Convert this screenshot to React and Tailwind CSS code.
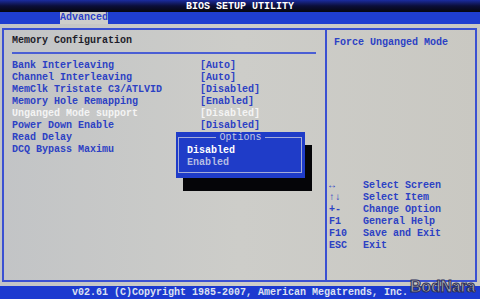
import React from "react";

const rows = [
  ["Bank Interleaving", "[Auto]"],
  ["Channel Interleaving", "[Auto]"],
  ["MemClk Tristate C3/ATLVID", "[Disabled]"],
  ["Memory Hole Remapping", "[Enabled]"],
  ["Unganged Mode support", "[Disabled]", true],
  ["Power Down Enable", "[Disabled]"],
  ["Read Delay", ""],
  ["DCQ Bypass Maximu", ""],
];

const help = [
  ["↔", "Select Screen"],
  ["↑↓", "Select Item"],
  ["+-", "Change Option"],
  ["F1", "General Help"],
  ["F10", "Save and Exit"],
  ["ESC", "Exit"],
];

export default function App() {
  return (
    <div className="relative w-[480px] h-[299px] overflow-hidden flex flex-col font-['Liberation_Mono','DejaVu_Sans_Mono',monospace] font-bold text-[10px] leading-[12px] bg-gradient-to-r from-[#c2c4c6] via-[#cdcdc9] to-[#c9c8c2]">
      <div className="h-[12px] shrink-0 bg-gradient-to-b from-[#1b2ca0] via-[#0b0e38] to-[#06060f] text-white text-center leading-[13px]">
        BIOS SETUP UTILITY
      </div>
      <div className="h-[12px] shrink-0 bg-[#1f3ed0] pl-[60px] flex">
        <div className="h-full bg-[#cdcecb] text-[#2a3fc8] leading-[12px]">Advanced</div>
      </div>
      <div className="flex-1 min-h-0 pt-[4px] pl-[2px] pr-[3px] pb-[4px]">
        <div className="flex h-full border-2 border-[#3a50d2]">
          <div className="w-[323px] shrink-0 border-r-2 border-[#3a50d2] pl-[8px] pt-[5px]">
            <div className="text-[#1c1c2a]">Memory Configuration</div>
            <div className="mt-[5px] mr-[9px] h-[2px] bg-[#4a5ed4]" />
            <div className="mt-[6px] flex flex-col">
              {rows.map(([label, value, sel]) => (
                <div
                  key={label}
                  className={`flex ${sel ? "text-[#f4f4f4]" : "text-[#2c41c4]"}`}
                >
                  <div className="w-[188px] shrink-0 whitespace-pre">{label}</div>
                  <div className="whitespace-pre">{value}</div>
                </div>
              ))}
            </div>
          </div>
          <div className="flex-1 pl-[2px] pt-[7px] text-[#2c41c4]">
            <div className="pl-[5px]">Force Unganged Mode</div>
            <div className="mt-[131px] flex flex-col">
              {help.map(([k, t]) => (
                <div key={t} className="flex">
                  <div className="w-[34px] shrink-0">{k}</div>
                  <div className="whitespace-pre">{t}</div>
                </div>
              ))}
            </div>
          </div>
        </div>
      </div>
      <div className="h-[13px] shrink-0 bg-[#1c3ad0] text-[#dde1f2] text-center leading-[14px] whitespace-pre">
        v02.61 (C)Copyright 1985-2007, American Megatrends, Inc.
      </div>

      <div className="absolute left-[176px] top-[132px] w-[129px] h-[46px] bg-[#1f3cc8] shadow-[7px_13px_0_0_#050508]">
        <div className="absolute left-[2px] top-[5px] right-[3px] bottom-[5px] border border-[#a4acd8]" />
        <div className="absolute left-0 right-0 top-0 flex justify-center">
          <div className="bg-[#1f3cc8] px-[3px] text-[#c4c8e0] font-normal leading-[11px]">Options</div>
        </div>
        <div className="absolute left-[11px] top-[13px] flex flex-col">
          <div className="text-white">Disabled</div>
          <div className="text-[#b4bce4]">Enabled</div>
        </div>
      </div>

      <div className="absolute left-[410px] top-[277px] w-[70px] whitespace-nowrap font-['Liberation_Sans',sans-serif] font-bold text-[16px] leading-[20px] tracking-[-0.2px] text-[#a8a8b0] [-webkit-text-stroke:1px_#2e3058]">
        BodNara
      </div>
    </div>
  );
}
